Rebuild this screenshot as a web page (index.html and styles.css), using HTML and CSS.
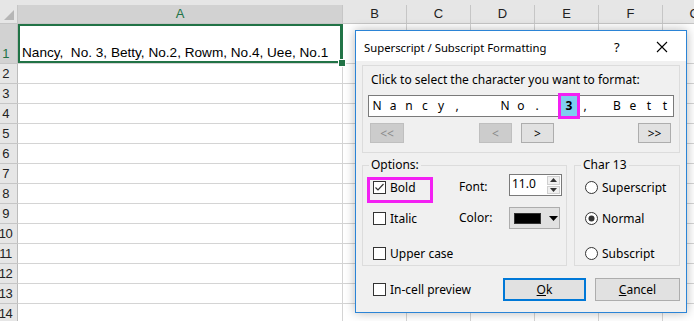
FILE: index.html
```html
<!DOCTYPE html>
<html lang="en">
<head>
    <meta charset="UTF-8">
    <title>Superscript / Subscript Formatting</title>
    <link rel="stylesheet" href="styles.css">
</head>
<body>
    <!-- worksheet -->
    <div class="sheet">
        <div class="hdr">
            <div class="corner"></div>
            <div class="colh col-a sel">A</div>
            <div class="colh">B</div>
            <div class="colh">C</div>
            <div class="colh">D</div>
            <div class="colh">E</div>
            <div class="colh">F</div>
            <div class="colh">G</div>
        </div>
        <div class="row first">
            <div class="rh sel">1</div>
            <div class="cell col-a active">Nancy,&nbsp; No. 3, Betty, No.2, Rowm, No.4, Uee, No.1</div>
            <div class="rest"></div>
        </div>
        <div class="row"><div class="rh">2</div><div class="cell col-a"></div><div class="rest"></div></div>
        <div class="row"><div class="rh">3</div><div class="cell col-a"></div><div class="rest"></div></div>
        <div class="row"><div class="rh">4</div><div class="cell col-a"></div><div class="rest"></div></div>
        <div class="row"><div class="rh">5</div><div class="cell col-a"></div><div class="rest"></div></div>
        <div class="row"><div class="rh">6</div><div class="cell col-a"></div><div class="rest"></div></div>
        <div class="row"><div class="rh">7</div><div class="cell col-a"></div><div class="rest"></div></div>
        <div class="row"><div class="rh">8</div><div class="cell col-a"></div><div class="rest"></div></div>
        <div class="row"><div class="rh">9</div><div class="cell col-a"></div><div class="rest"></div></div>
        <div class="row"><div class="rh">10</div><div class="cell col-a"></div><div class="rest"></div></div>
        <div class="row"><div class="rh">11</div><div class="cell col-a"></div><div class="rest"></div></div>
        <div class="row"><div class="rh">12</div><div class="cell col-a"></div><div class="rest"></div></div>
        <div class="row"><div class="rh">13</div><div class="cell col-a"></div><div class="rest"></div></div>
        <div class="row"><div class="rh">14</div><div class="cell col-a"></div><div class="rest"></div></div>
    </div>

    <!-- dialog -->
    <div class="dialog">
        <div class="titlebar">
            <span class="title">Superscript / Subscript Formatting</span>
            <span class="help">?</span>
            <span class="close">
                <svg width="12" height="12" viewBox="0 0 12 12">
                    <path d="M1 1L11 11M11 1L1 11" stroke="#000" stroke-width="1.1" fill="none"/>
                </svg>
            </span>
        </div>

        <div class="dlg-body">
            <div class="picker">
                <div class="prompt">Click to select the character you want to format:</div>
                <div class="chars">
                    <span>N</span><span>a</span><span>n</span><span>c</span><span>y</span><span>,</span><span></span><span></span><span>N</span><span>o</span><span>.</span><span></span><span class="cur">3</span><span>,</span><span></span><span>B</span><span>e</span><span>t</span><span>t</span>
                </div>
                <div class="nav">
                    <button class="btn off first-btn">&lt;&lt;</button>
                    <button class="btn off prev-btn">&lt;</button>
                    <button class="btn next-btn">&gt;</button>
                    <button class="btn last-btn">&gt;&gt;</button>
                </div>
            </div>

            <div class="groups">
                <fieldset class="group options">
                    <legend>Options:</legend>
                    <label class="cb mark">
                        <svg width="13" height="13" viewBox="0 0 13 13">
                            <rect x="0.5" y="0.5" width="12" height="12" fill="#fff" stroke="#333"/>
                            <path d="M2.5 6.5L5 9L10.5 3" stroke="#333" stroke-width="1.2" fill="none"/>
                        </svg>
                        Bold
                    </label>
                    <span class="lbl">Font:</span>
                    <div class="spin">
                        <span class="spin-val">11.0</span>
                        <span class="spin-btns">
                            <span class="spin-up"><svg width="7" height="4" viewBox="0 0 7 4"><path d="M0 4L3.5 0L7 4z" fill="#333"/></svg></span>
                            <span class="spin-dn"><svg width="7" height="4" viewBox="0 0 7 4"><path d="M0 0L3.5 4L7 0z" fill="#333"/></svg></span>
                        </span>
                    </div>

                    <label class="cb">
                        <svg width="13" height="13" viewBox="0 0 13 13"><rect x="0.5" y="0.5" width="12" height="12" fill="#fff" stroke="#333"/></svg>
                        Italic
                    </label>
                    <span class="lbl">Color:</span>
                    <div class="color-pick">
                        <span class="swatch"></span>
                        <svg width="9" height="5" viewBox="0 0 9 5"><path d="M0 0L4.5 5L9 0z" fill="#000"/></svg>
                    </div>

                    <label class="cb wide">
                        <svg width="13" height="13" viewBox="0 0 13 13"><rect x="0.5" y="0.5" width="12" height="12" fill="#fff" stroke="#333"/></svg>
                        Upper case
                    </label>
                </fieldset>

                <fieldset class="group chargrp">
                    <legend>Char 13</legend>
                    <label class="rb">
                        <svg width="13" height="13" viewBox="0 0 13 13"><circle cx="6.5" cy="6.5" r="6" fill="#fff" stroke="#333"/></svg>
                        Superscript
                    </label>
                    <label class="rb">
                        <svg width="13" height="13" viewBox="0 0 13 13"><circle cx="6.5" cy="6.5" r="6" fill="#fff" stroke="#333"/><circle cx="6.5" cy="6.5" r="3" fill="#333"/></svg>
                        Normal
                    </label>
                    <label class="rb">
                        <svg width="13" height="13" viewBox="0 0 13 13"><circle cx="6.5" cy="6.5" r="6" fill="#fff" stroke="#333"/></svg>
                        Subscript
                    </label>
                </fieldset>
            </div>

            <div class="footer">
                <label class="cb">
                    <svg width="13" height="13" viewBox="0 0 13 13"><rect x="0.5" y="0.5" width="12" height="12" fill="#fff" stroke="#333"/></svg>
                    In-cell preview
                </label>
                <button class="btn big ok"><u>O</u>k</button>
                <button class="btn big"><u>C</u>ancel</button>
            </div>
        </div>
    </div>
</body>
</html>
```

FILE: styles.css
```css
* {
    margin: 0;
    padding: 0;
    box-sizing: border-box;
}

body {
    width: 694px;
    height: 321px;
    overflow: hidden;
    background-color: #ffffff;
    position: relative;
    font-family: 'Liberation Sans', Arial, sans-serif;
}

/* worksheet */
.sheet {
    width: 694px;
}

.hdr {
    display: flex;
    height: 24px;
    padding-top: 5px;
    background-color: #e6e6e6;
    border-bottom: 1px solid #c6c6c6;
}

.corner {
    width: 18px;
    flex-shrink: 0;
    border-right: 1px solid #c6c6c6;
    position: relative;
}

.corner::after {
    content: "";
    position: absolute;
    right: 3px;
    bottom: 3px;
    border-left: 10px solid transparent;
    border-bottom: 10px solid #b6b6b6;
}

.colh {
    width: 64px;
    flex-shrink: 0;
    border-right: 1px solid #c6c6c6;
    text-align: center;
    font-size: 13px;
    line-height: 18px;
    color: #222;
}

.col-a {
    width: 325px;
    flex-shrink: 0;
}

.colh.sel {
    background-color: #d2d2d2;
    color: #217346;
}

.row {
    display: flex;
    height: 20px;
    border-bottom: 1px solid #d4d4d4;
}

.row.first {
    height: 40px;
}

.rh {
    width: 18px;
    flex-shrink: 0;
    padding-right: 6px;
    display: flex;
    align-items: flex-end;
    justify-content: center;
    background-color: #e6e6e6;
    border-right: 1px solid #bcbcbc;
    box-shadow: 0 1px 0 #c6c6c6;
    font-size: 13px;
    line-height: 16px;
    padding-bottom: 1px;
    color: #222;
    letter-spacing: -0.5px;
}

.rh.sel {
    background-color: #d2d2d2;
    color: #217346;
}

.cell {
    border-right: 1px solid #d4d4d4;
    display: flex;
    align-items: flex-end;
    padding: 0 4px 2px;
    font-size: 13.6px;
    line-height: 16px;
    color: #000;
    white-space: nowrap;
}

.cell.active {
    position: relative;
    box-shadow: inset 0 0 0 2px #217346;
    border-right-color: #217346;
}

.cell.active::after {
    content: "";
    position: absolute;
    right: -4px;
    bottom: -4px;
    width: 6px;
    height: 6px;
    background-color: #217346;
    border: 1px solid #fff;
}

.rest {
    flex: 1;
    background: repeating-linear-gradient(to right, transparent 0 63px, #d4d4d4 63px 64px);
}

/* dialog */
.dialog {
    position: absolute;
    left: 355px;
    top: 30px;
    width: 332px;
    height: 283px;
    border: 1px solid #2b84d6;
    background-color: #f0f0f0;
    box-shadow: 0 0 10px rgba(0, 0, 0, 0.28);
    font-family: 'Noto Sans', sans-serif;
    font-size: 12px;
    color: #000;
}

.titlebar {
    display: flex;
    align-items: center;
    height: 30px;
    padding-left: 8px;
    padding-top: 2px;
    background-color: #ffffff;
}

.title {
    flex: 1;
    font-size: 11.3px;
}

.help {
    width: 12px;
    margin-right: 30px;
    font-size: 13px;
}

.close {
    display: flex;
    margin-right: 18px;
}

.dlg-body {
    padding: 4px 6px 11px;
}

.picker {
    height: 88px;
    border: 1px solid #dcdcdc;
    padding: 6px 5px 0;
}

.prompt {
    line-height: 16px;
    padding-left: 3px;
}

.chars {
    display: flex;
    width: 306px;
    height: 22px;
    margin-top: 7px;
    background-color: #fff;
    border: 1px solid #7a7a7a;
    font-size: 12px;
}

.chars span {
    width: 16px;
    height: 20px;
    line-height: 20px;
    text-align: center;
}

.chars .cur {
    background-color: #7fcfef;
    font-weight: bold;
    outline: 3px solid #f320f3;
}

.nav {
    display: flex;
    margin-top: 6px;
}

.btn {
    height: 20px;
    width: 33px;
    background-color: #e1e1e1;
    border: 1px solid #adadad;
    font-family: 'Noto Sans', sans-serif;
    font-size: 12px;
    color: #000;
}

.btn.off {
    background-color: #cccccc;
    border-color: #bfbfbf;
    color: #8a8a8a;
}

.first-btn {
    width: 34px;
    margin-left: 2px;
}

.prev-btn {
    margin-left: 75px;
}

.next-btn {
    margin-left: 9px;
}

.last-btn {
    margin-left: 84px;
}

.groups {
    display: flex;
    gap: 7px;
    margin-top: 4px;
}

.group {
    border: 1px solid #dcdcdc;
    padding: 3px 4px 1px 10px;
    display: grid;
    grid-template-rows: 31px 35px 22px;
    align-items: start;
}

.group legend {
    line-height: 16px;
    padding: 0 2px;
    margin-left: -4px;
}

.options {
    width: 205px;
    grid-template-columns: 86px 50px 53px;
}

.chargrp {
    width: 106px;
}

.cb,
.rb {
    display: flex;
    align-items: center;
    gap: 4px;
    height: 22px;
    white-space: nowrap;
}

.cb.wide {
    grid-column: 1 / 4;
}

.cb.mark {
    position: relative;
}

/* highlight box round the Bold option */
.cb.mark::after {
    content: "";
    position: absolute;
    left: -6px;
    top: 1px;
    width: 60px;
    height: 20px;
    border: 3px solid #f320f3;
}

.lbl {
    height: 22px;
    line-height: 22px;
}

.spin {
    display: flex;
    height: 22px;
    margin-top: -2px;
    background-color: #fff;
    border: 1px solid #7a7a7a;
}

.spin-val {
    flex: 1;
    padding-left: 2px;
    line-height: 18px;
}

.spin-btns {
    display: flex;
    flex-direction: column;
    width: 15px;
    padding: 1px;
    gap: 1px;
}

.spin-up,
.spin-dn {
    flex: 1;
    display: flex;
    align-items: center;
    justify-content: center;
    background-color: #f0f0f0;
    border: 1px solid #d0d0d0;
}

.color-pick {
    display: flex;
    align-items: center;
    gap: 8px;
    height: 22px;
    width: 51px;
    padding-left: 4px;
    background-color: #e1e1e1;
    border: 1px solid #adadad;
}

.swatch {
    width: 27px;
    height: 11px;
    background-color: #000;
    border: 1px solid #333;
}

.footer {
    display: flex;
    align-items: center;
    height: 23px;
    margin-top: 12px;
}

.footer .cb {
    margin-left: 11px;
}

.btn.big {
    height: 23px;
    width: 85px;
}

.btn.ok {
    width: 83px;
    margin-left: auto;
    margin-right: 9px;
    border: 2px solid #0078d7;
}
```
